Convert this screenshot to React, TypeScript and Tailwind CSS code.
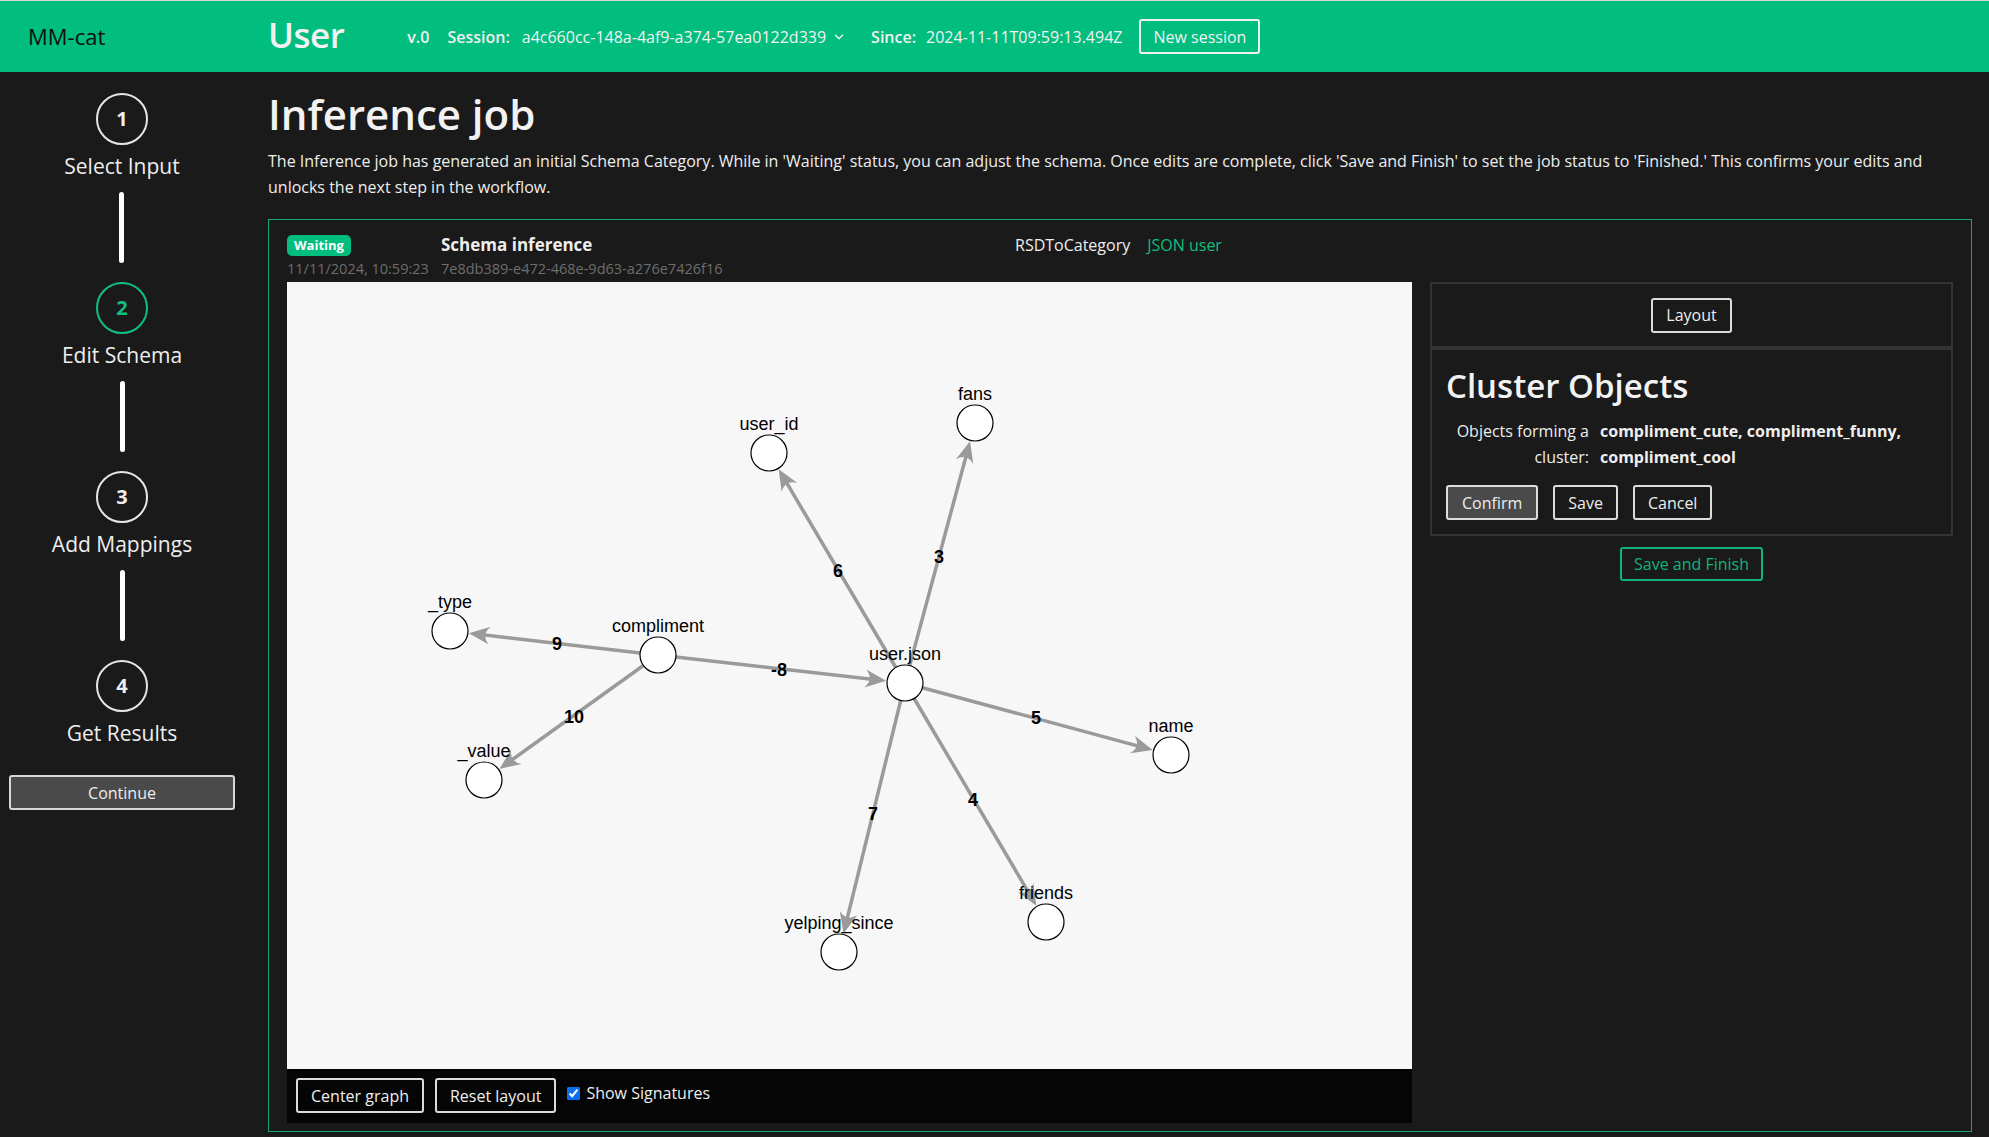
import { ChevronDown } from "lucide-react";

type Node = { id: string; x: number; y: number };

const nodes: Node[] = [
  { id: "user_id", x: 482, y: 171 },
  { id: "fans", x: 688, y: 141 },
  { id: "_type", x: 163, y: 349 },
  { id: "compliment", x: 371, y: 373 },
  { id: "user.json", x: 618, y: 401 },
  { id: "name", x: 884, y: 473 },
  { id: "_value", x: 197, y: 498 },
  { id: "yelping_since", x: 552, y: 670 },
  { id: "friends", x: 759, y: 640 },
];

// source, target, label, label position
const edges: [string, string, string, number, number][] = [
  ["user.json", "user_id", "6", 551, 288],
  ["user.json", "fans", "3", 652, 274],
  ["compliment", "_type", "9", 270, 361],
  ["compliment", "user.json", "-8", 492, 387],
  ["compliment", "_value", "10", 287, 434],
  ["user.json", "name", "5", 749, 435],
  ["user.json", "friends", "4", 686, 517],
  ["user.json", "yelping_since", "7", 586, 531],
];

const R = 18;

function byId(id: string) {
  return nodes.find((n) => n.id === id)!;
}

function Edge({ from, to }: { from: string; to: string }) {
  const a = byId(from);
  const b = byId(to);
  const dx = b.x - a.x;
  const dy = b.y - a.y;
  const len = Math.hypot(dx, dy);
  const ux = dx / len;
  const uy = dy / len;
  const sx = a.x + ux * R;
  const sy = a.y + uy * R;
  const tx = b.x - ux * (R + 1);
  const ty = b.y - uy * (R + 1);
  const angle = (Math.atan2(dy, dx) * 180) / Math.PI;
  return (
    <g>
      <line x1={sx} y1={sy} x2={tx - ux * 10} y2={ty - uy * 10} stroke="#9a9a9a" strokeWidth={3.5} />
      <path
        d="M0,0 L-21,9 Q-12,0 -21,-9 Z"
        fill="#9a9a9a"
        transform={`translate(${tx} ${ty}) rotate(${angle})`}
      />
    </g>
  );
}

const arial = "'Liberation Sans', Arial, sans-serif";

function Graph() {
  return (
    <svg width="1125" height="787" className="block">
      {edges.map(([f, t]) => (
        <Edge key={f + t} from={f} to={t} />
      ))}
      {edges.map(([, , l, x, y]) => (
        <text key={l} x={x} y={y + 6.5} textAnchor="middle" fontFamily={arial} fontWeight={700} fontSize={18} fill="#000">
          {l}
        </text>
      ))}
      {nodes.map((n) => (
        <circle key={n.id} cx={n.x} cy={n.y} r={R} fill="#fff" stroke="#000" strokeWidth={1.2} />
      ))}
      {nodes.map((n) => (
        <text key={n.id} x={n.x} y={n.y - 23} textAnchor="middle" fontFamily={arial} fontSize={18} fill="#000">
          {n.id}
        </text>
      ))}
    </svg>
  );
}

function Step({ n, label, active, last }: { n: number; label: string; active?: boolean; last?: boolean }) {
  return (
    <div className="flex flex-col items-center">
      <div
        className={
          active
            ? "w-[52px] h-[52px] rounded-full border-2 border-[#0fbf7f] text-[#0fbf7f] flex items-center justify-center text-[20px] font-bold"
            : "w-[52px] h-[52px] rounded-full border-2 border-[#e6e6e6] text-[#eeeeee] flex items-center justify-center text-[20px] font-bold"
        }
      >
        {n}
      </div>
      <div className="mt-[6px] text-[21px] leading-[30px] text-[#eeeeee]">{label}</div>
      {!last && <div className="mt-[11px] mb-[19px] w-[5px] h-[71px] rounded-full bg-white" />}
    </div>
  );
}

function Btn({ children, className = "" }: { children: React.ReactNode; className?: string }) {
  return (
    <button
      className={
        "h-[35px] px-[13px] rounded-[3px] border-2 border-[#dcdcdc] text-[16px] text-[#eeeeee] leading-none " + className
      }
    >
      {children}
    </button>
  );
}

export default function App() {
  return (
    <div className="min-h-screen bg-[#1a1a1a] text-[#eeeeee] font-['Open_Sans',sans-serif]">
      <header className="h-[72px] bg-[#01bd7e] border-t border-[#d8d8d8] flex items-center">
        <div className="w-[268px] pl-[28px] text-[22px] text-[#111111]">MM-cat</div>
        <div className="text-[35px] font-semibold tracking-[-0.5px] leading-none text-[#f2f2f2] -mt-[4px]">User</div>
        <div className="ml-[63px] flex items-center text-[16px] text-[#f2f2f2]">
          <span className="font-semibold">v.0</span>
          <span className="ml-[18px] font-semibold">Session:</span>
          <span className="ml-[12px]">a4c660cc-148a-4af9-a374-57ea0122d339</span>
          <ChevronDown size={14} strokeWidth={2.5} className="ml-[6px]" />
          <span className="ml-[25px] font-semibold">Since:</span>
          <span className="ml-[10px]">2024-11-11T09:59:13.494Z</span>
          <button className="ml-[17px] h-[35px] px-[12px] rounded-[3px] border-2 border-[#f0f0f0] text-[16px]">
            New session
          </button>
        </div>
      </header>

      <div className="flex">
        <aside className="w-[244px] shrink-0 pt-[21px] px-[9px] flex flex-col items-center">
          <Step n={1} label="Select Input" />
          <Step n={2} label="Edit Schema" active />
          <Step n={3} label="Add Mappings" />
          <Step n={4} label="Get Results" last />
          <button className="mt-[27px] w-full h-[35px] rounded-[3px] border-2 border-[#d6d6d6] bg-[#4a4a4a] text-[16px] text-[#eeeeee]">
            Continue
          </button>
        </aside>

        <main className="flex-1 ml-[24px] pr-[17px]">
          <h1 className="mt-[18px] text-[42px] leading-[48px] font-semibold text-[#f2f2f2]">Inference job</h1>
          <p className="mt-[10px] text-[16px] leading-[26px] text-[#eeeeee] pr-[30px]">
            The Inference job has generated an initial Schema Category. While in 'Waiting' status, you can adjust the
            schema. Once edits are complete, click 'Save and Finish' to set the job status to 'Finished.' This confirms
            your edits and unlocks the next step in the workflow.
          </p>

          <section className="mt-[19px] border border-[#15a872] pl-[18px] pr-[18px] pt-[14px] pb-[8px]">
            <div className="grid grid-cols-[154px_574px_1fr] text-[16px]">
              <div className="h-[22px] flex items-center">
                <span className="px-[7px] h-[21px] leading-[21px] rounded-[5px] bg-[#01bd7e] text-white text-[13px] font-bold">
                  Waiting
                </span>
              </div>
              <div className="font-bold text-[17px] leading-[22px]">Schema inference</div>
              <div className="leading-[22px]">
                <span className="text-[#eeeeee]">RSDToCategory</span>
                <span className="ml-[17px] text-[#0fbf7f]">JSON user</span>
              </div>
              <div className="text-[#6d6d6d] text-[14.5px] leading-[26px]">11/11/2024, 10:59:23</div>
              <div className="text-[#6d6d6d] text-[14.5px] leading-[26px]">7e8db389-e472-468e-9d63-a276e7426f16</div>
              <div />
            </div>

            <div className="flex gap-[18px]">
              <div className="w-[1125px] shrink-0">
                <div className="h-[787px] bg-[#f7f7f7] overflow-hidden">
                  <Graph />
                </div>
                <div className="h-[54px] bg-[#050505] pl-[9px] pt-[9px] flex items-start gap-[11px]">
                  <Btn className="bg-transparent">Center graph</Btn>
                  <Btn className="bg-transparent">Reset layout</Btn>
                  <label className="flex items-center gap-[6px] text-[16px] mt-[3px]">
                    <input type="checkbox" defaultChecked className="w-[13px] h-[13px] accent-[#0b6ef0]" />
                    Show Signatures
                  </label>
                </div>
              </div>

              <div className="flex-1 flex flex-col">
                <div className="border-2 border-[#333333] h-[66px] flex items-center justify-center">
                  <Btn>Layout</Btn>
                </div>
                <div className="border-2 border-[#333333] pl-[14px] pr-[14px] pt-[14px] pb-[14px]">
                  <h2 className="text-[33px] font-semibold leading-[44px] text-[#f2f2f2]">Cluster Objects</h2>
                  <div className="mt-[10px] grid grid-cols-[143px_1fr] gap-x-[11px] text-[16px] leading-[26px]">
                    <div className="text-right">Objects forming a</div>
                    <div className="font-bold">compliment_cute, compliment_funny,</div>
                    <div className="text-right">cluster:</div>
                    <div className="font-bold">compliment_cool</div>
                  </div>
                  <div className="mt-[15px] flex gap-[15px]">
                    <Btn className="bg-[#4a4a4a] px-[14px]">Confirm</Btn>
                    <Btn>Save</Btn>
                    <Btn>Cancel</Btn>
                  </div>
                </div>
                <div className="mt-[11px] flex justify-center">
                  <button className="h-[34px] px-[12px] rounded-[3px] border-2 border-[#12b47b] text-[16px] text-[#12b47b]">
                    Save and Finish
                  </button>
                </div>
              </div>
            </div>
          </section>
        </main>
      </div>
    </div>
  );
}
